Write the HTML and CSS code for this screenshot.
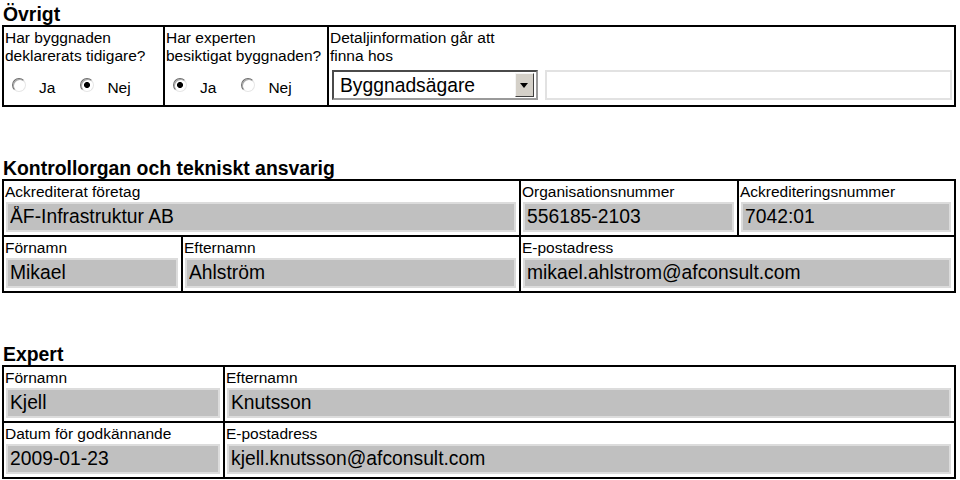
FILE: index.html
```html
<!DOCTYPE html>
<html lang="sv">
<head>
    <meta charset="UTF-8">
    <meta name="viewport" content="width=device-width, initial-scale=1.0">
    <title>Övrigt, kontrollorgan och expert</title>
    <link rel="stylesheet" href="styles.css">
</head>
<body>
    <section class="section">
        <h2 class="section-title">Övrigt</h2>
        <div class="box">
            <div class="row row-other">
                <div class="cell cell-question">
                    <div class="label">Har byggnaden<br>deklarerats tidigare?</div>
                    <div class="choices">
                        <label class="choice"><input type="radio" name="declared"> Ja</label>
                        <label class="choice"><input type="radio" name="declared" checked> Nej</label>
                    </div>
                </div>
                <div class="cell cell-question">
                    <div class="label">Har experten<br>besiktigat byggnaden?</div>
                    <div class="choices">
                        <label class="choice"><input type="radio" name="inspected" checked> Ja</label>
                        <label class="choice"><input type="radio" name="inspected"> Nej</label>
                    </div>
                </div>
                <div class="cell cell-question">
                    <div class="label">Detaljinformation går att<br>finna hos</div>
                    <div class="controls">
                        <div class="dropdown">
                            <select>
                                <option>Byggnadsägare</option>
                            </select>
                            <span class="dropdown-btn"></span>
                        </div>
                        <input class="blank" type="text">
                    </div>
                </div>
            </div>
        </div>
    </section>

    <section class="section">
        <h2 class="section-title">Kontrollorgan och tekniskt ansvarig</h2>
        <div class="box">
            <div class="row row-company">
                <div class="cell">
                    <div class="label">Ackrediterat företag</div>
                    <input class="value" type="text" value="ÅF-Infrastruktur AB" readonly>
                </div>
                <div class="cell">
                    <div class="label">Organisationsnummer</div>
                    <input class="value" type="text" value="556185-2103" readonly>
                </div>
                <div class="cell">
                    <div class="label">Ackrediteringsnummer</div>
                    <input class="value" type="text" value="7042:01" readonly>
                </div>
            </div>
            <div class="row row-person">
                <div class="cell">
                    <div class="label">Förnamn</div>
                    <input class="value" type="text" value="Mikael" readonly>
                </div>
                <div class="cell">
                    <div class="label">Efternamn</div>
                    <input class="value" type="text" value="Ahlström" readonly>
                </div>
                <div class="cell">
                    <div class="label">E-postadress</div>
                    <input class="value" type="text" value="mikael.ahlstrom@afconsult.com" readonly>
                </div>
            </div>
        </div>
    </section>

    <section class="section">
        <h2 class="section-title">Expert</h2>
        <div class="box">
            <div class="row row-expert">
                <div class="cell">
                    <div class="label">Förnamn</div>
                    <input class="value" type="text" value="Kjell" readonly>
                </div>
                <div class="cell">
                    <div class="label">Efternamn</div>
                    <input class="value" type="text" value="Knutsson" readonly>
                </div>
            </div>
            <div class="row row-expert">
                <div class="cell">
                    <div class="label">Datum för godkännande</div>
                    <input class="value" type="text" value="2009-01-23" readonly>
                </div>
                <div class="cell">
                    <div class="label">E-postadress</div>
                    <input class="value" type="text" value="kjell.knutsson@afconsult.com" readonly>
                </div>
            </div>
        </div>
    </section>
</body>
</html>
```

FILE: styles.css
```css
body {
    margin: 0;
    padding: 3px 0 0 2px;
    font-family: "Liberation Sans", Arial, sans-serif;
    color: #000;
    background: #fff;
}

.section + .section {
    margin-top: 50px;
}

.section-title {
    margin: 0;
    padding-left: 1px;
    font-size: 19.4px;
    line-height: 22px;
    font-weight: bold;
}

.box {
    width: 954px;
    box-sizing: border-box;
    border: 2px solid #000;
}

.row {
    display: grid;
}

.row + .row {
    border-top: 2px solid #000;
}

.row-other {
    grid-template-columns: 159px 164px 1fr;
}

.row-company {
    grid-template-columns: 515px 218px 1fr;
}

.row-person {
    grid-template-columns: 177px 338px 1fr;
}

.row-expert {
    grid-template-columns: 219px 1fr;
}

.cell {
    min-width: 0;
    padding: 2px 0 3px 0;
}

.cell + .cell {
    border-left: 2px solid #000;
}

.label {
    padding-left: 1px;
    font-size: 15.5px;
    line-height: 18px;
    white-space: nowrap;
}

.value {
    display: block;
    box-sizing: border-box;
    width: calc(100% - 5px);
    height: 30px;
    margin: 1px 0 0 2px;
    padding: 0 2px;
    border: 2px solid #dcdcdc;
    background: #c0c0c0;
    font-family: inherit;
    font-size: 19.3px;
    color: #000;
    outline: none;
}

/* top box */
.cell-question {
    padding: 2px 0 0 0;
}

.choices {
    display: flex;
    align-items: flex-end;
    gap: 25px;
    height: 40px;
    box-sizing: border-box;
    padding: 0 0 8px 8px;
}

.choice {
    display: flex;
    align-items: flex-end;
    gap: 13px;
    font-size: 15.5px;
    line-height: 18px;
}

.choice input {
    appearance: none;
    -webkit-appearance: none;
    width: 14px;
    height: 14px;
    margin: 0 0 5px 0;
    border-radius: 50%;
    border: 1px solid;
    border-color: #6e6e6e #e6e6e6 #e6e6e6 #6e6e6e;
    background: #fff;
    box-shadow: inset 1px 1px 0 #a8a8a8;
}

.choice input:checked {
    background: radial-gradient(circle, #000 0, #000 2.6px, #fff 3.4px);
}

.controls {
    display: flex;
    align-items: center;
    gap: 7px;
    height: 40px;
    padding: 0 2px 0 3px;
}

.dropdown {
    position: relative;
    flex: none;
}

.dropdown select {
    appearance: none;
    -webkit-appearance: none;
    display: block;
    width: 206px;
    height: 30px;
    padding: 0 0 0 6px;
    border: 2px solid;
    border-color: #4a4a4a #9a9a9a #9a9a9a #4a4a4a;
    border-radius: 0;
    background: #fff;
    font-family: inherit;
    font-size: 19.3px;
    color: #000;
}

.dropdown-btn {
    position: absolute;
    top: 3px;
    right: 4px;
    width: 19px;
    height: 24px;
    box-sizing: border-box;
    border: 1px solid;
    border-color: #f4f4f4 #404040 #404040 #f4f4f4;
    background: #d4d0c8;
    pointer-events: none;
}

.dropdown-btn::after {
    content: "";
    position: absolute;
    left: 4px;
    top: 9px;
    border-left: 4.5px solid transparent;
    border-right: 4.5px solid transparent;
    border-top: 5px solid #000;
}

.blank {
    flex: 1;
    min-width: 0;
    height: 30px;
    box-sizing: border-box;
    border: 2px solid #e2e2e2;
    background: #fff;
    outline: none;
}
```
